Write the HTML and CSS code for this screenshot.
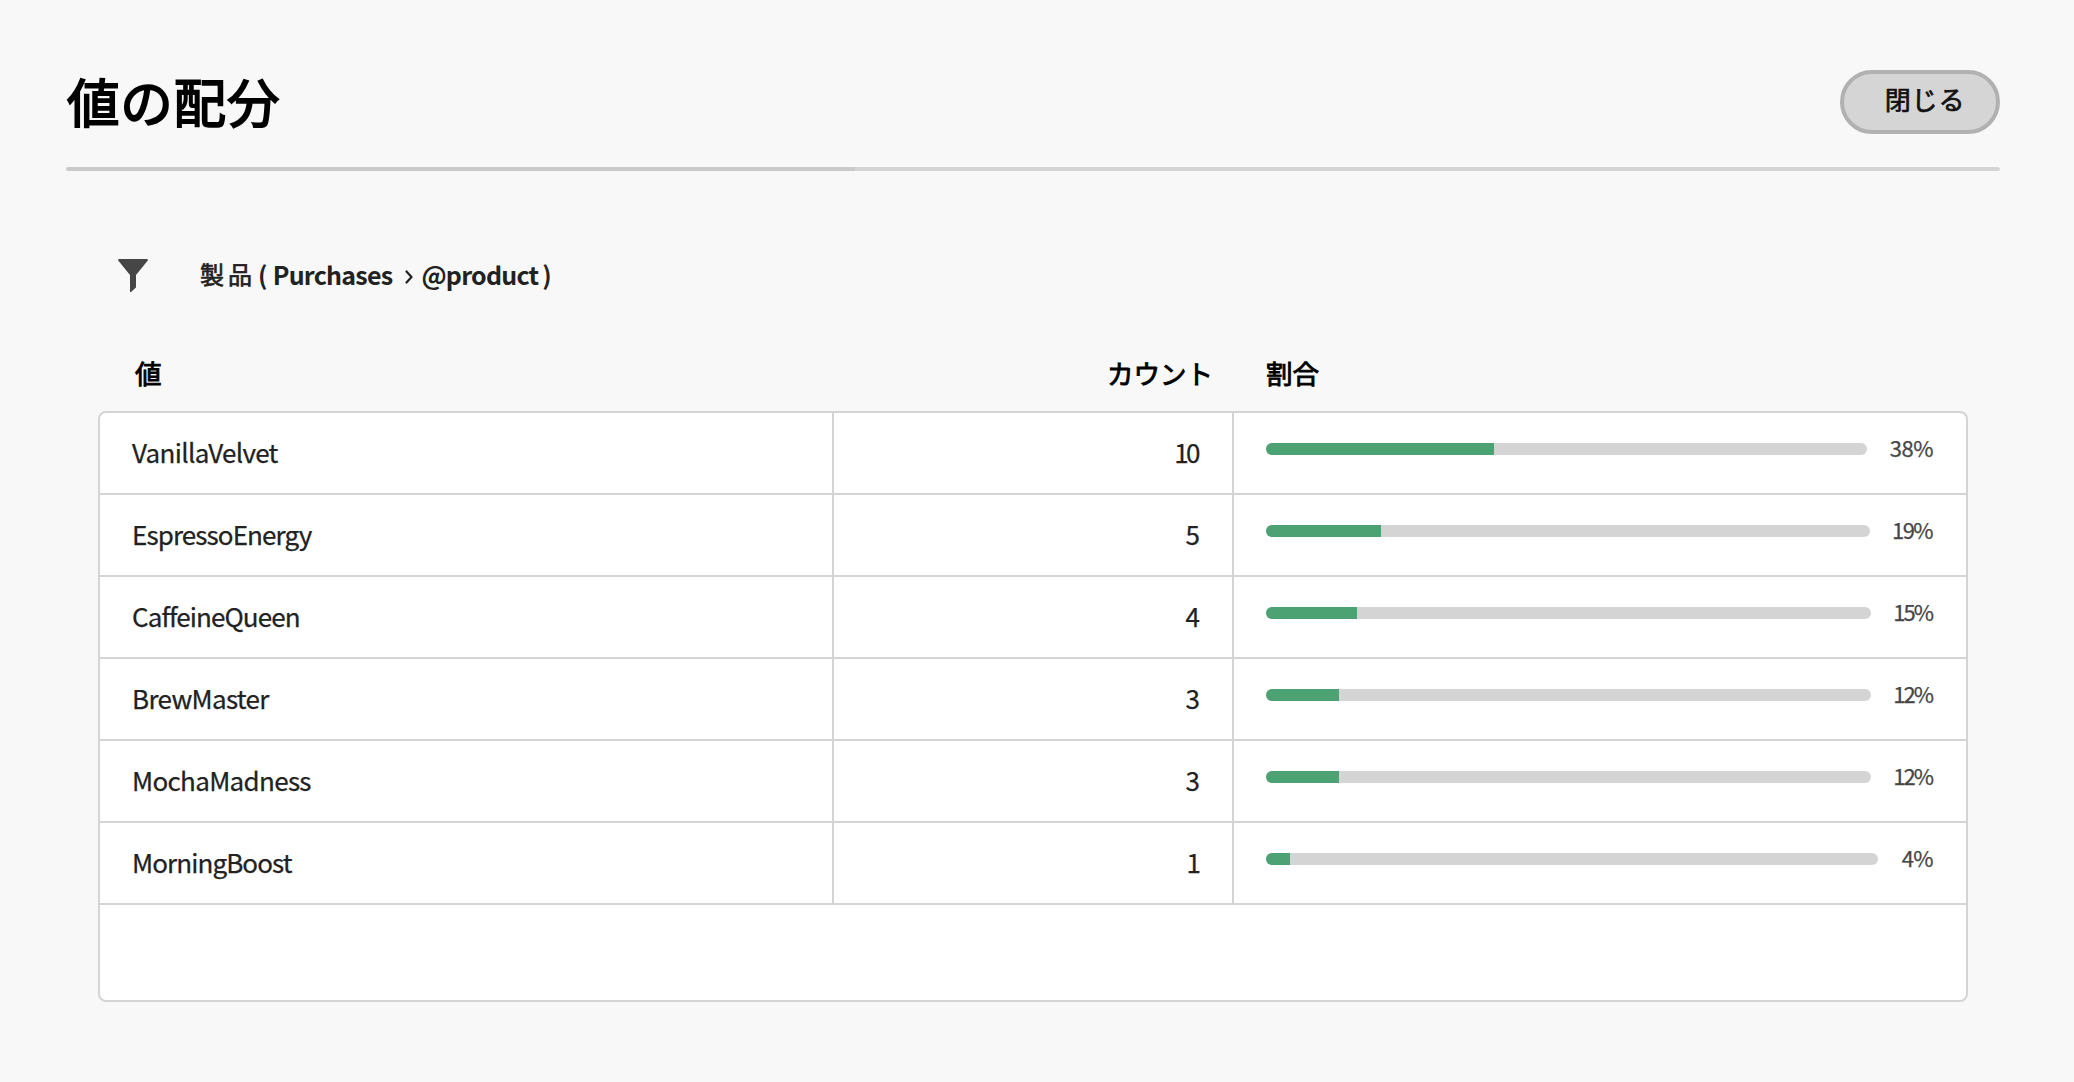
FILE: index.html
```html
<!DOCTYPE html>
<html lang="ja">
<head>
<meta charset="utf-8">
<title>値の配分</title>
<link rel="stylesheet" href="styles.css">
</head>
<body>
<main class="dialog">
  <header class="header">
    <h1 class="title">値の配分</h1>
    <button class="close" type="button"><span class="close-label">閉じる</span></button>
  </header>
  <div class="divider"></div>
  <section class="content">
    <div class="filter">
      <svg class="filter-icon" width="30" height="34" viewBox="0 0 30 34"><path d="M1 0H29Q30.5 .6 29.6 1.8L18 16V28.400L13 33Q12 33.400 12 32.400V16L.4 1.8Q-.5 .6 1 0Z" fill="#464646"/></svg>
      <div class="path"><span class="path-name">製品</span><span class="path-open">(</span><span class="path-schema">Purchases</span><svg class="chevron" width="8" height="14" viewBox="0 0 8 14"><path d="M1.500 1.500L6.500 7L1.500 12.500" fill="none" stroke="#222" stroke-width="2.200" stroke-linecap="round" stroke-linejoin="round"/></svg><span class="path-attr">@product</span><span class="path-end">)</span></div>
    </div>
    <div class="row head">
      <div class="head-value">値</div>
      <div class="head-count">カウント</div>
      <div class="head-share">割合</div>
    </div>
    <div class="table">
      <div class="row"><div class="cell">VanillaVelvet</div><div class="cell count pair">10</div><div class="cell share"><div class="track"><div class="fill" style="width:38%"></div></div><span class="percent wide">38%</span></div></div>
      <div class="row"><div class="cell tight">EspressoEnergy</div><div class="cell count">5</div><div class="cell share"><div class="track"><div class="fill" style="width:19%"></div></div><span class="percent mid">19%</span></div></div>
      <div class="row"><div class="cell tight">CaffeineQueen</div><div class="cell count">4</div><div class="cell share"><div class="track"><div class="fill" style="width:15%"></div></div><span class="percent">15%</span></div></div>
      <div class="row"><div class="cell">BrewMaster</div><div class="cell count">3</div><div class="cell share"><div class="track"><div class="fill" style="width:12%"></div></div><span class="percent">12%</span></div></div>
      <div class="row"><div class="cell">MochaMadness</div><div class="cell count">3</div><div class="cell share"><div class="track"><div class="fill" style="width:12%"></div></div><span class="percent">12%</span></div></div>
      <div class="row"><div class="cell tight">MorningBoost</div><div class="cell count one">1</div><div class="cell share"><div class="track"><div class="fill" style="width:4%"></div></div><span class="percent single">4%</span></div></div>
    </div>
  </section>
</main>
</body>
</html>
```

FILE: styles.css
```css
* { box-sizing: border-box; }
body {
  margin: 0;
  background: #f8f8f8;
  color: #222;
  font-family: "Noto Sans CJK JP", sans-serif;
}
.dialog { height: 1082px; padding: 70px 74px 0 66px; overflow: hidden; }
.header { display: flex; justify-content: space-between; height: 97px; }
.title {
  margin: 0; padding-left: 1px;
  font-size: 52.500px; line-height: 61px; font-weight: 400; letter-spacing: .8px;
  color: #000; -webkit-text-stroke: 1.8px #000;
}
.close {
  width: 160px; height: 64px; padding: 0 0 7px 10px;
  border: 4px solid #b1b1b1; border-radius: 32px; background: #d5d5d5;
  font: 400 26px/40px "Noto Sans CJK JP", sans-serif; letter-spacing: .8px;
  color: #111; -webkit-text-stroke: .7px #111;
}
.divider {
  height: 4px; border-radius: 2px;
  background: linear-gradient(90deg, #cacaca 789px, #d4d4d4 789px);
}
.content { padding: 0 32px; }
.filter { display: flex; align-items: center; height: 34px; margin-top: 88px; padding-left: 20px; }
.path {
  display: flex; align-items: center;
  margin-left: 52px; padding-bottom: 4px;
  font-size: 25px; line-height: 34px; font-weight: 700; letter-spacing: -.75px;
}
.path-name { font-size: 24px; font-weight: 400; letter-spacing: 4px; -webkit-text-stroke: .7px #222; }
.path-open { margin: 0 6px 0 2px; }
.chevron { margin: 5px 8px 0 13px; }
.path-end { margin-left: 4px; }
.row { display: grid; grid-template-columns: 734px 400px 1fr; }
.head {
  height: 118px; padding-top: 60px;
  font-size: 26.500px; line-height: 40px; font-weight: 400;
  color: #000; -webkit-text-stroke: .9px #000;
}
.head-value { padding-left: 37px; }
.head-count { text-align: right; padding-right: 19px; }
.head-share { padding-left: 34px; }
.table { height: 591px; background: #fff; border: 2px solid #d4d4d4; border-radius: 8px; }
.table .row { height: 82px; border-bottom: 2px solid #d4d4d4; }
.cell {
  display: flex; align-items: center; height: 80px; padding: 0 32px 2px;
  border-right: 2px solid #d4d4d4;
  font-size: 26px; line-height: 36px; letter-spacing: -.68px;
  -webkit-text-stroke: .25px currentColor;
}
.cell.tight { letter-spacing: -.9px; }
.count { justify-content: flex-end; letter-spacing: 0; }
.count.pair { letter-spacing: -2.500px; padding-right: 34px; }
.count.one { padding-right: 31px; }
.cell.share { border-right: 0; padding: 0 33px 8px 32px; letter-spacing: -2px; }
.track { flex: 1; height: 12px; border-radius: 6px; background: #d4d4d4; overflow: hidden; }
.fill { height: 100%; background: #4da273; }
.percent {
  display: flex; justify-content: flex-end;
  width: 38px; margin: -5px 0 0 24px; padding-right: 1px;
  font-size: 22px; color: #464646;
}
.percent.mid { width: 39px; letter-spacing: -1.600px; }
.percent.wide { width: 42px; padding: 0; letter-spacing: -.5px; }
.percent.single { width: 31px; padding: 0; letter-spacing: -.6px; }
```
